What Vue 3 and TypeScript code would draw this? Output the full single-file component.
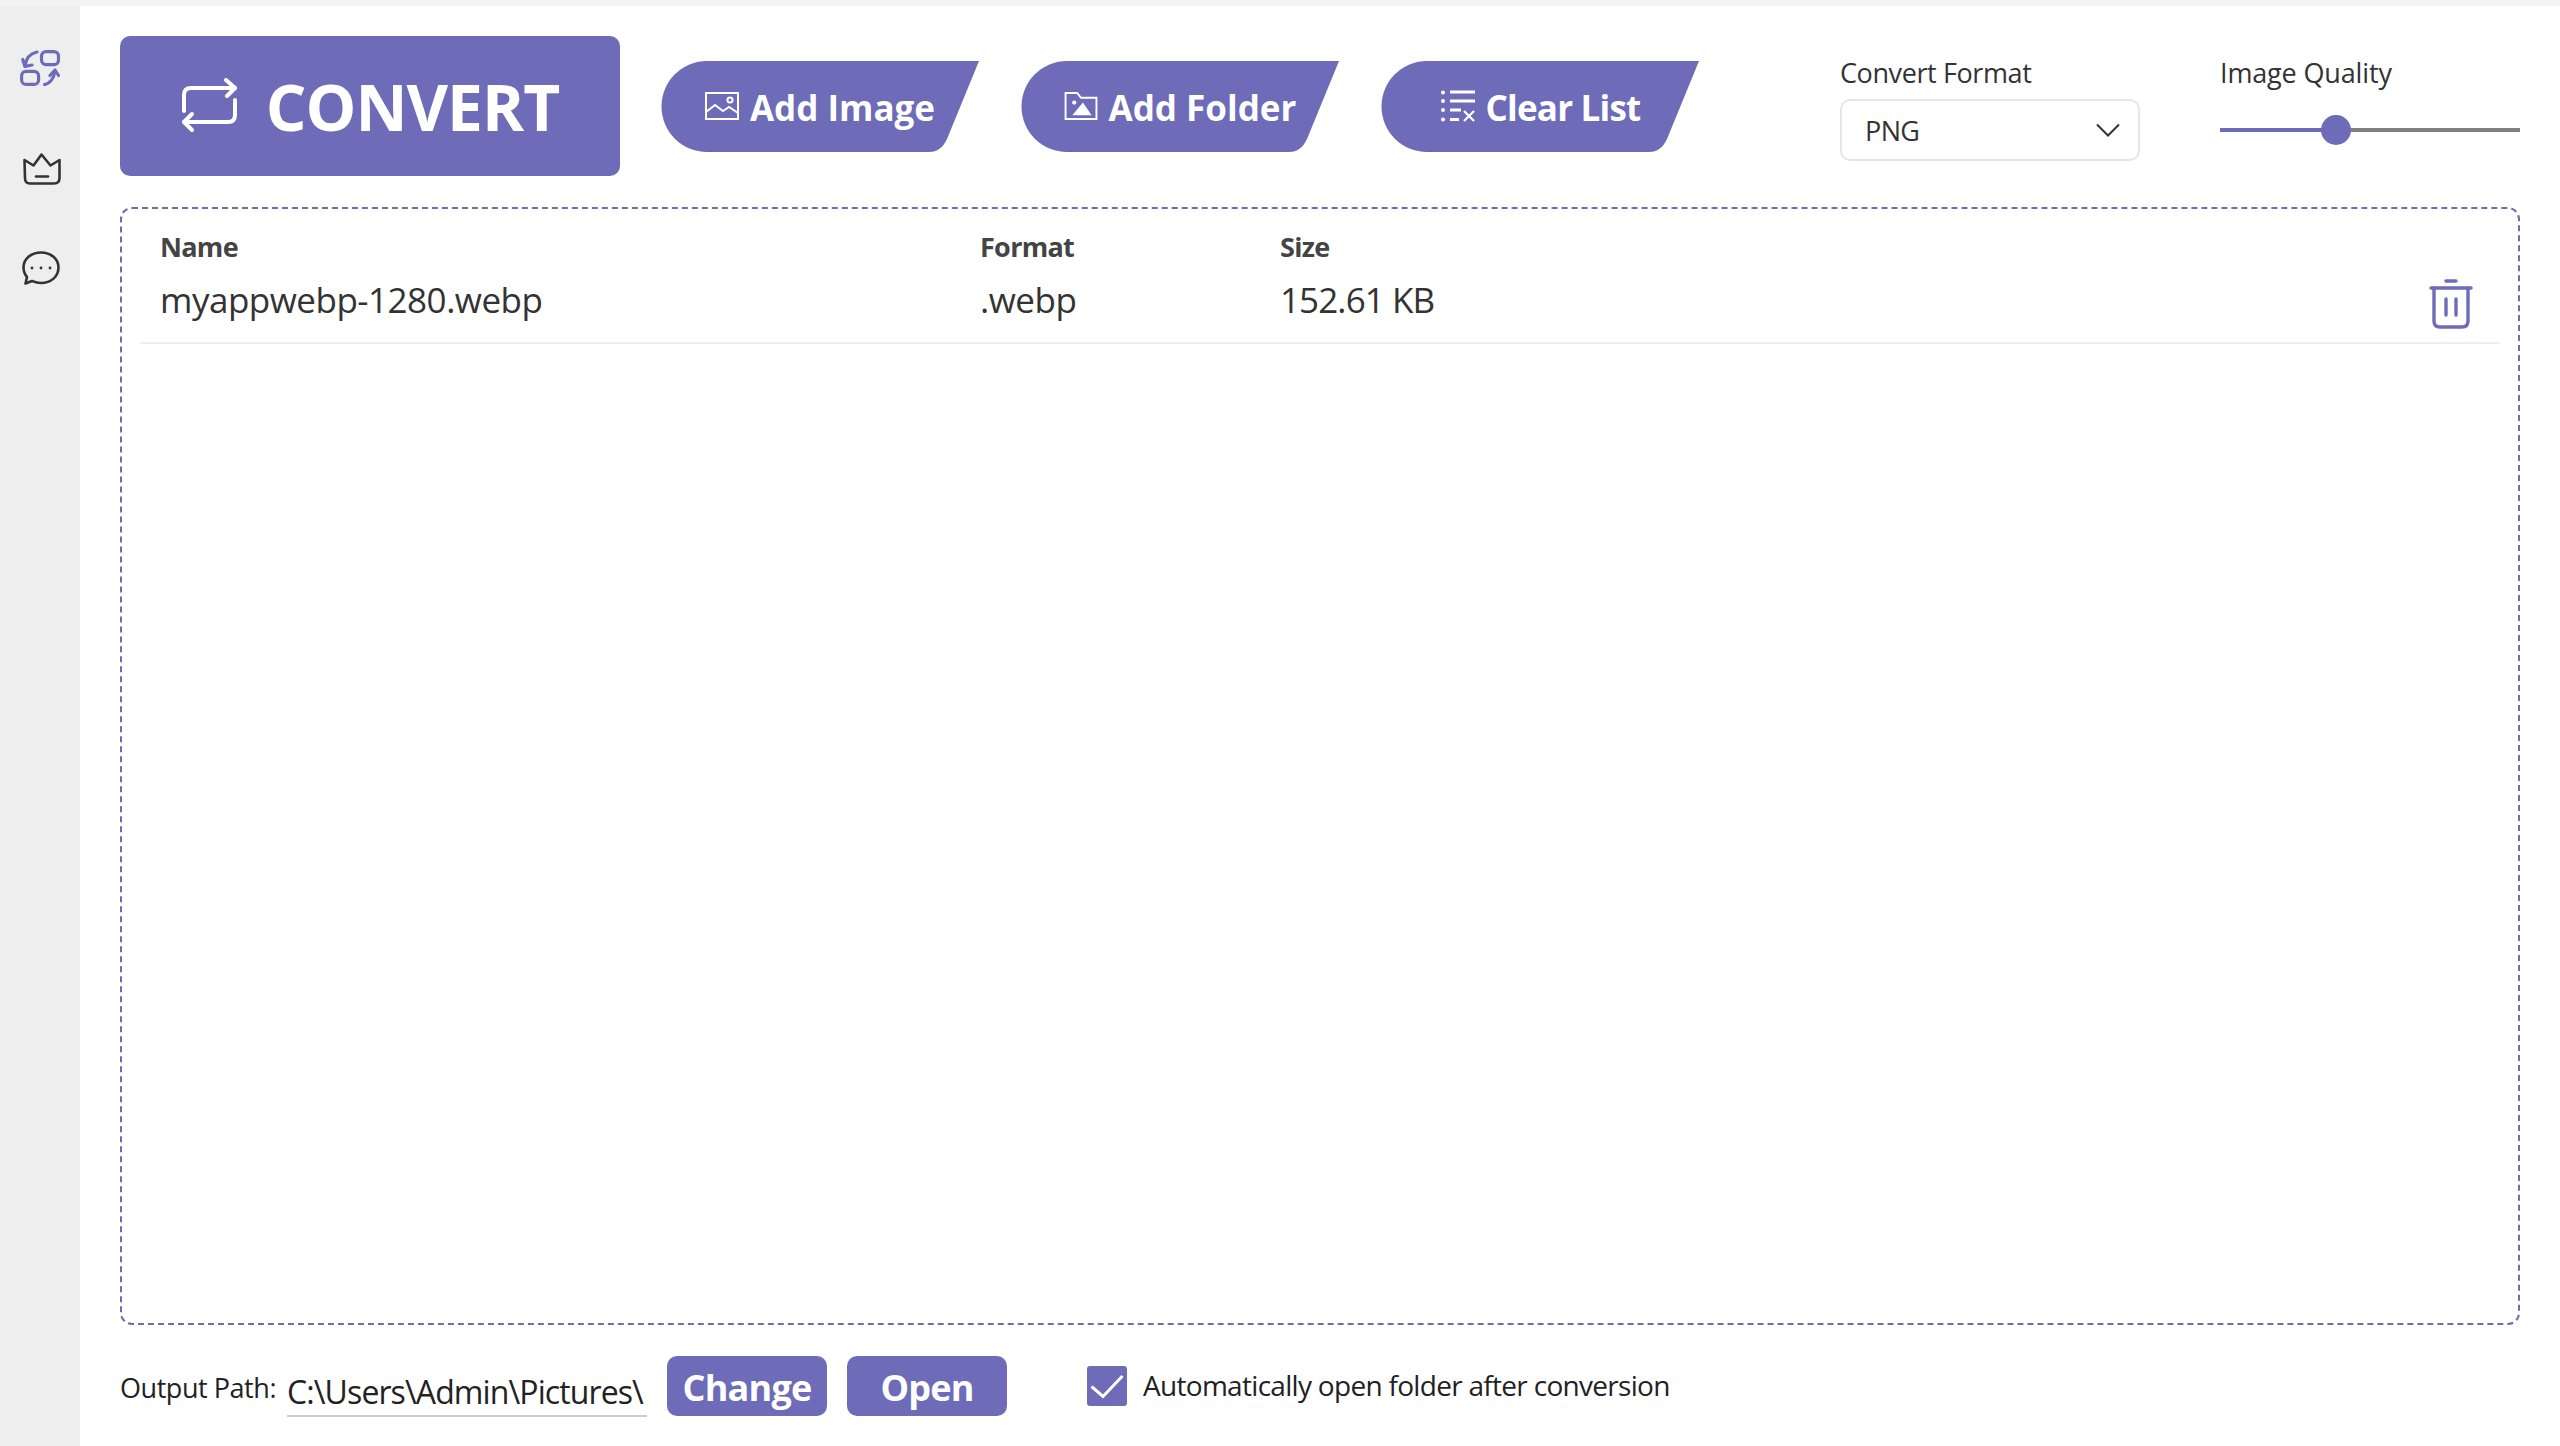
<script setup lang="ts">
interface FileRow { name: string; format: string; size: string }
const files: FileRow[] = [{ name: 'myappwebp-1280.webp', format: '.webp', size: '152.61 KB' }]
const quality = 38.7
</script>

<template>
  <div class="app">
    <div class="topstrip"></div>
    <div class="body">
      <aside class="sidebar">
        <svg class="nav nav1" viewBox="0 0 40 36" fill="none" stroke="#6e6bb8" stroke-width="3.2" stroke-linecap="round" stroke-linejoin="round">
          <rect x="21.5" y="1.6" width="17" height="13" rx="4.5" />
          <rect x="1.6" y="21.4" width="17" height="13" rx="4.5" />
          <path d="M17 2 C10 3.5 6 8 5 16" />
          <path d="M2.7 9.5 L5 16.5 L12 15" />
          <path d="M24.5 34.5 C30 33.5 34 28 35 21" />
          <path d="M30 25.5 L35 20 L38.5 25.5" />
        </svg>
        <svg class="nav nav2" viewBox="0 0 38 32" fill="none" stroke="#333" stroke-width="2.6" stroke-linecap="round" stroke-linejoin="round">
          <path d="M1.5 7 L10.5 12.5 L18.5 1.5 L27.5 12.5 L36.5 7 V25 Q36.5 30.5 31 30.5 H7 Q2 30.5 2 25 Z" />
          <path d="M13 23.5 H25" />
        </svg>
        <svg class="nav nav3" viewBox="0 0 38 34" fill="none" stroke="#333" stroke-width="2.6" stroke-linecap="round" stroke-linejoin="round">
          <path d="M19 1.5 C29 1.5 36.5 8 36.5 16.5 C36.5 25.5 29 32 19 32 C15.5 32 12.5 31 10 30 L3.5 32.5 L5 26 C2.8 23.4 1.5 20.2 1.5 16.5 C1.5 8 9 1.5 19 1.5 Z" />
          <circle cx="10" cy="17" r="1.4" fill="#333" stroke="none" />
          <circle cx="19" cy="17" r="1.4" fill="#333" stroke="none" />
          <circle cx="28" cy="17" r="1.4" fill="#333" stroke="none" />
        </svg>
      </aside>

      <main class="main">
        <div class="toolbar">
          <button class="convert">
            <svg class="convert-icon" viewBox="0 0 56 56" fill="none" stroke="#fff" stroke-width="4" stroke-linecap="round" stroke-linejoin="round">
              <path d="M3 33 V17 Q3 10 10 10 H54" />
              <path d="M45 2 L54 10 L46 18" />
              <path d="M54 22 V37 Q54 44 47 44 H3" />
              <path d="M11 36 L3 44 L11 52" />
            </svg>
            <span>CONVERT</span>
          </button>

          <div class="actions">
            <button class="action">
              <svg class="action-icon" viewBox="0 0 34 28" fill="none" stroke="#fff" stroke-width="2">
                <rect x="1" y="1" width="32" height="26" />
                <circle cx="25" cy="8" r="2.6" />
                <path d="M1 20 L10 13 L18 19 L24 15 L33 21" />
              </svg>
              <span>Add Image</span>
            </button>
            <button class="action">
              <svg class="action-icon" viewBox="0 0 34 29" fill="none" stroke="#fff" stroke-width="2">
                <path d="M1 1 H13 L17 6 H33 V28 H1 Z" />
                <circle cx="10" cy="11" r="2.2" fill="#fff" stroke="none" />
                <path d="M8 24 L19 11 L28 24 Z" fill="#fff" stroke="none" />
              </svg>
              <span>Add Folder</span>
            </button>
            <button class="action clear">
              <svg class="action-icon list-icon" viewBox="0 0 35 32" fill="none" stroke="#fff">
                <circle cx="3" cy="2.5" r="2" fill="#fff" stroke="none" />
                <circle cx="3" cy="11" r="2" fill="#fff" stroke="none" />
                <circle cx="3" cy="20" r="2" fill="#fff" stroke="none" />
                <circle cx="3" cy="29.5" r="2" fill="#fff" stroke="none" />
                <path d="M10 2 H35 M10 11 H35" stroke-width="3" />
                <path d="M10 20 H21 M10 29.5 H19" stroke-width="3" />
                <path d="M24 21 L34 31 M34 21 L24 31" stroke-width="2.2" />
              </svg>
              <span>Clear List</span>
            </button>
          </div>

          <div class="format">
            <label class="field-label">Convert Format</label>
            <div class="select">
              <span>PNG</span>
              <svg class="chevron" viewBox="0 0 24 14" fill="none" stroke="#333" stroke-width="2">
                <path d="M1 1.5 L12 12.5 L23 1.5" />
              </svg>
            </div>
          </div>

          <div class="quality">
            <label class="field-label">Image Quality</label>
            <div class="slider">
              <div class="slider-fill" :style="{ width: quality + '%' }"></div>
              <div class="slider-thumb" :style="{ left: quality + '%' }"></div>
            </div>
          </div>
        </div>

        <section class="file-list">
          <div class="grid head">
            <span>Name</span><span>Format</span><span>Size</span><span></span>
          </div>
          <div v-for="f in files" :key="f.name" class="grid row">
            <span>{{ f.name }}</span>
            <span>{{ f.format }}</span>
            <span class="size">{{ f.size }}</span>
            <svg class="trash" viewBox="0 0 44 50" fill="none" stroke="#6e6bb8" stroke-width="3.4" stroke-linecap="round" stroke-linejoin="round">
              <path d="M17 2 H27" />
              <path d="M2 9 H42" />
              <path d="M5 9 V42 Q5 48 11 48 H33 Q39 48 39 42 V9" />
              <path d="M17 20 V36 M27 20 V36" />
            </svg>
          </div>
        </section>

        <footer class="footer">
          <span class="path-label">Output Path:</span>
          <span class="path-value">C:\Users\Admin\Pictures\</span>
          <button class="small">Change</button>
          <button class="small">Open</button>
          <label class="auto">
            <span class="check">
              <svg viewBox="0 0 40 40" fill="none" stroke="#fff" stroke-width="3">
                <path d="M4.5 20.5 L16 30.5 L35.5 10" />
              </svg>
            </span>
            <span>Automatically open folder after conversion</span>
          </label>
        </footer>
      </main>
    </div>
  </div>
</template>

<style>
html, body { margin: 0; background: #fff; }
</style>

<style scoped>
.app {
  display: flex;
  flex-direction: column;
  height: 1446px;
  font-family: "Open Sans", "Noto Sans", sans-serif;
  color: #333;
  overflow: hidden;
}
.topstrip { height: 6px; flex: none; background: #f3f3f3; }
.body { display: flex; flex: 1; min-height: 0; }
.sidebar {
  width: 80px;
  flex: none;
  background: #eeeeee;
  display: flex;
  flex-direction: column;
  align-items: center;
}
.nav { display: block; flex: none; }
.nav1 { width: 40px; height: 36px; margin-top: 44px; }
.nav2 { width: 38px; height: 32px; margin-top: 67px; margin-left: 3px; }
.nav3 { width: 38px; height: 34px; margin-top: 66px; margin-left: 2px; }

.main {
  flex: 1;
  min-width: 0;
  padding: 30px 40px 0;
  display: flex;
  flex-direction: column;
  background: #fff;
}
.toolbar { display: flex; height: 140px; flex: none; }
button { border: 0; font-family: inherit; color: #fff; background: #6e6bb8; padding: 0; }
.convert {
  width: 500px;
  height: 140px;
  flex: none;
  border-radius: 10px;
  display: flex;
  align-items: center;
  justify-content: center;
  gap: 29px;
  font-size: 64px;
  font-weight: 700;
  letter-spacing: -1px;
}
.convert-icon { width: 56px; height: 56px; }
.actions { display: flex; gap: 42px; margin-left: 41px; align-self: flex-start; margin-top: 25px; }
.action {
  width: 318px;
  height: 91px;
  display: flex;
  align-items: center;
  justify-content: center;
  gap: 11px;
  font-size: 35px;
  font-weight: 700;
  letter-spacing: 0;
  line-height: 48px;
  padding-top: 2px;
  box-sizing: border-box;
  clip-path: path("M46 0 H318 L286 78 Q280 91 268 91 H46 A45.5 45.5 0 0 1 46 0 Z");
}
.action.clear { letter-spacing: -0.8px; }
.action-icon { width: 34px; height: 28px; flex: none; margin-top: -4px; }
.action-icon.list-icon { width: 35px; height: 32px; }
.format { width: 300px; margin-left: 141px; flex: none; }
.field-label {
  display: block;
  font-size: 27px;
  line-height: 36px;
  margin-top: 19px;
  color: #333;
  letter-spacing: -0.4px;
}
.select {
  box-sizing: border-box;
  height: 62px;
  margin-top: 8px;
  border: 2px solid #e6e6e6;
  border-radius: 10px;
  padding: 0 18px 0 23px;
  display: flex;
  align-items: center;
  justify-content: space-between;
  font-size: 27px;
  letter-spacing: -0.6px;
}
.chevron { width: 24px; height: 14px; }
.quality { width: 300px; margin-left: 80px; flex: none; }
.quality .field-label { letter-spacing: -0.15px; }
.slider { position: relative; height: 4px; background: #808080; margin-top: 37px; }
.slider-fill { height: 100%; background: #6e6bb8; }
.slider-thumb {
  position: absolute;
  top: 50%;
  width: 30px;
  height: 30px;
  border-radius: 50%;
  background: #6e6bb8;
  transform: translate(-50%, -50%);
}

.file-list {
  flex: 1;
  min-height: 0;
  margin-top: 31px;
  box-sizing: border-box;
  border: 2px dashed #6e6bb8;
  border-radius: 12px;
  padding: 20px 18px 0;
}
.grid {
  display: grid;
  grid-template-columns: 820px 300px 1fr 44px;
  padding-left: 20px;
  padding-right: 27px;
}
.head {
  font-size: 27px;
  font-weight: 700;
  line-height: 36px;
  color: #444;
  letter-spacing: -0.7px;
}
.row {
  box-sizing: border-box;
  height: 79px;
  font-size: 35px;
  color: #333;
  letter-spacing: -0.5px;
  border-bottom: 2px solid #eeeeee;
}
.row > span { line-height: 50px; margin-top: 10px; }
.row > .size { letter-spacing: -0.9px; }
.trash { width: 44px; height: 50px; margin-top: 14px; }

.footer {
  flex: none;
  display: flex;
  align-items: center;
  height: 121px;
  box-sizing: border-box;
  padding-top: 31px;
  padding-bottom: 30px;
}
.path-label { font-size: 27px; letter-spacing: -0.45px; color: #222; margin-right: 9px; width: 158px; white-space: nowrap; margin-top: 2px; }
.path-value {
  width: 360px;
  box-sizing: border-box;
  font-size: 32px;
  line-height: 48px;
  color: #222;
  letter-spacing: -0.9px;
  border-bottom: 2px solid #ccc;
  white-space: nowrap;
  margin-top: 10px;
  padding-top: 3px;
  height: 52px;
}
.small {
  width: 160px;
  height: 60px;
  margin-left: 20px;
  border-radius: 10px;
  font-size: 36px;
  font-weight: 700;
  letter-spacing: -0.8px;
  flex: none;
  padding-top: 2px;
}
.auto {
  display: flex;
  align-items: center;
  gap: 16px;
  margin-left: 80px;
  font-size: 28px;
  letter-spacing: -0.7px;
  color: #222;
  white-space: nowrap;
}
.auto > span:last-child { margin-top: -2px; }
.check { width: 40px; height: 40px; background: #6e6bb8; border-radius: 3px; display: block; flex: none; }
.check svg { display: block; width: 40px; height: 40px; }
</style>
